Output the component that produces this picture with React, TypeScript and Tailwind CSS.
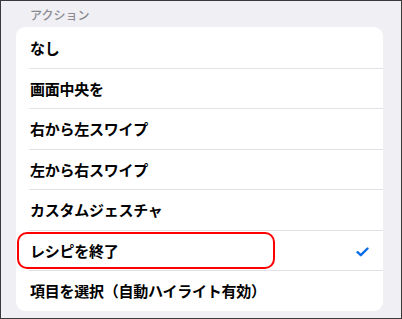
import React from "react";

const items = [
  "なし",
  "画面中央を",
  "右から左スワイプ",
  "左から右スワイプ",
  "カスタムジェスチャ",
  "レシピを終了",
  "項目を選択（自動ハイライト有効）",
];

const selected = 5;

export default function App() {
  return (
    <div
      className="w-[402px] h-[319px] border border-[#3a3a3a] bg-[#efeff4] overflow-hidden"
      style={{ fontFamily: '"Noto Sans CJK JP", "Noto Sans", sans-serif' }}
    >
      {/* Section header */}
      <div className="h-[26px] pl-[29px] pt-px flex items-center text-[12px] font-medium text-[#8a8a8f]">
        アクション
      </div>

      {/* List */}
      <div className="ml-[15px] w-[367px] bg-white rounded-[9px]">
        {items.map((label, i) => (
          <div key={label} className="relative h-[40.5px] pl-[13px]">
            <div
              className={
                "h-full flex items-center justify-between pl-px pr-[14px] pt-px " +
                (i > 0 ? "border-t border-[#e1e1e6]" : "")
              }
            >
              <span className="text-[15px] font-bold text-black tracking-[-0.25px]">
                {label}
              </span>
              {i === selected && (
                <svg width="13" height="10" viewBox="0 0 13 10" className="mt-[2px]">
                  <path
                    d="M1.5 5.2 L4.8 8.2 L11.5 1.5"
                    fill="none"
                    stroke="#0a6ee8"
                    strokeWidth="2.4"
                    strokeLinecap="round"
                    strokeLinejoin="round"
                  />
                </svg>
              )}
            </div>
            {i === selected && (
              <div className="absolute left-px top-[2.5px] w-[258px] h-[37px] border-[2.5px] border-[#ff0000] rounded-[10px]" />
            )}
          </div>
        ))}
      </div>
    </div>
  );
}
